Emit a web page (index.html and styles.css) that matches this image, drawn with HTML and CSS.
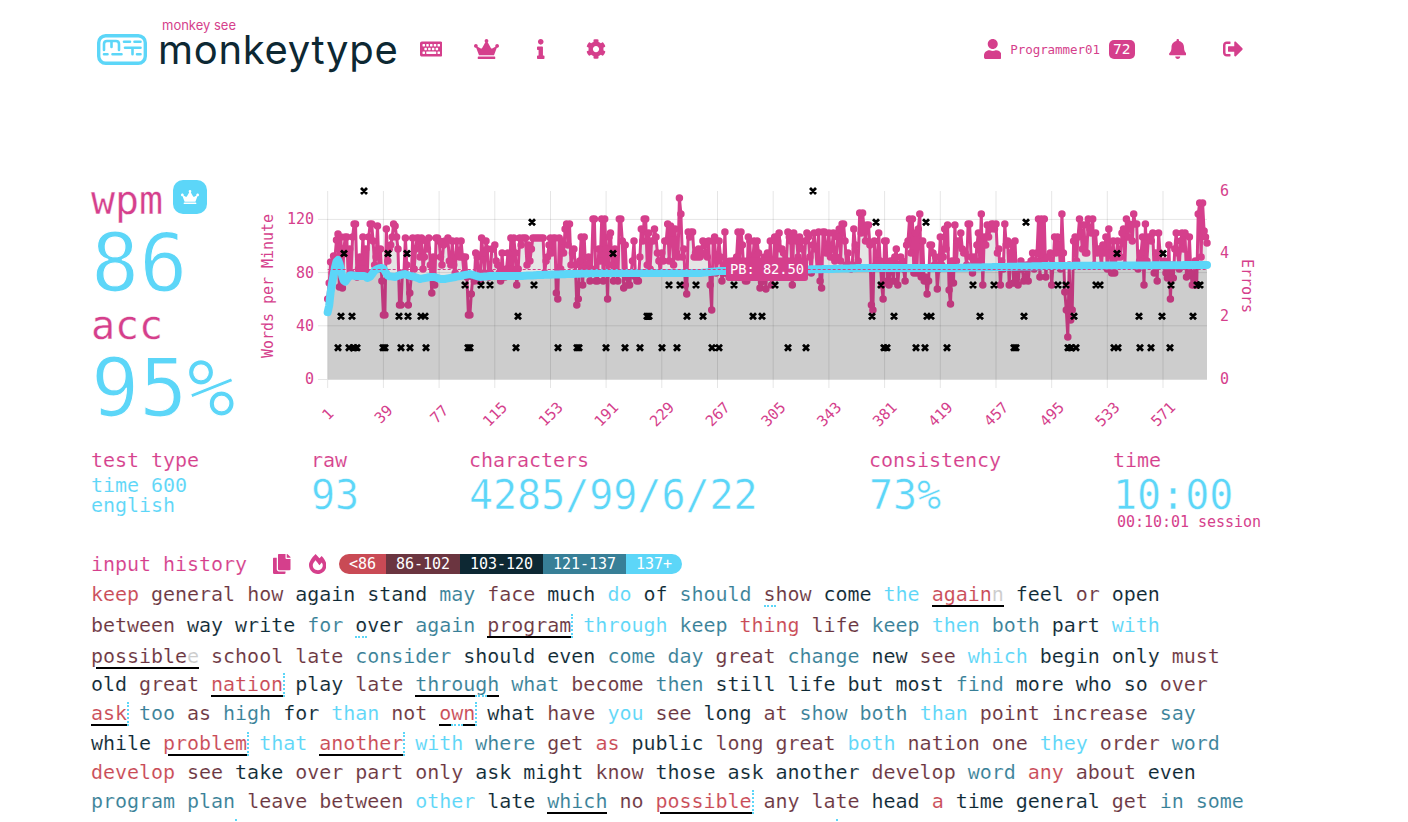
FILE: index.html
```html
<!DOCTYPE html>
<html lang="en">

<head>
    <meta charset="UTF-8">
    <meta name="viewport" content="width=device-width, initial-scale=1.0">
    <title>Monkeytype</title>
    <link rel="stylesheet" href="styles.css">
</head>

<body>
    <div class="page">

        <header class="top">
            <svg class="logo" viewBox="97 34 50 31" aria-label="logo">
                <rect x="98.7" y="35.7" width="46.6" height="27.6" rx="7" />
                <path d="M104 50V44Q104 41 107 41H116Q119 41 119 44V50M111.5 41V47" />
                <path d="M124 41.7H130M134.5 41.7H140.5M125 47.7H140.5M132.5 47.7V54.3" />
                <path d="M104 54.3H107.5M112.5 54.3H121.5M137 54.3H140.5" />
            </svg>
            <div class="brand">
                <div class="brand-see">monkey see</div>
                <div class="brand-name">monkeytype</div>
            </div>
            <nav class="nav">
                <a class="nav-item"><svg class="icon" viewBox="0 0 576 512"><path d="M528 448H48c-26.51 0-48-21.49-48-48V112c0-26.51 21.49-48 48-48h480c26.51 0 48 21.49 48 48v288c0 26.51-21.49 48-48 48zM128 180v-40c0-6.627-5.373-12-12-12H76c-6.627 0-12 5.373-12 12v40c0 6.627 5.373 12 12 12h40c6.627 0 12-5.373 12-12zm96 0v-40c0-6.627-5.373-12-12-12h-40c-6.627 0-12 5.373-12 12v40c0 6.627 5.373 12 12 12h40c6.627 0 12-5.373 12-12zm96 0v-40c0-6.627-5.373-12-12-12h-40c-6.627 0-12 5.373-12 12v40c0 6.627 5.373 12 12 12h40c6.627 0 12-5.373 12-12zm96 0v-40c0-6.627-5.373-12-12-12h-40c-6.627 0-12 5.373-12 12v40c0 6.627 5.373 12 12 12h40c6.627 0 12-5.373 12-12zm96 0v-40c0-6.627-5.373-12-12-12h-40c-6.627 0-12 5.373-12 12v40c0 6.627 5.373 12 12 12h40c6.627 0 12-5.373 12-12zm-336 96v-40c0-6.627-5.373-12-12-12h-40c-6.627 0-12 5.373-12 12v40c0 6.627 5.373 12 12 12h40c6.627 0 12-5.373 12-12zm96 0v-40c0-6.627-5.373-12-12-12h-40c-6.627 0-12 5.373-12 12v40c0 6.627 5.373 12 12 12h40c6.627 0 12-5.373 12-12zm96 0v-40c0-6.627-5.373-12-12-12h-40c-6.627 0-12 5.373-12 12v40c0 6.627 5.373 12 12 12h40c6.627 0 12-5.373 12-12zm96 0v-40c0-6.627-5.373-12-12-12h-40c-6.627 0-12 5.373-12 12v40c0 6.627 5.373 12 12 12h40c6.627 0 12-5.373 12-12zm-336 96v-40c0-6.627-5.373-12-12-12H76c-6.627 0-12 5.373-12 12v40c0 6.627 5.373 12 12 12h40c6.627 0 12-5.373 12-12zm288 0v-40c0-6.627-5.373-12-12-12H172c-6.627 0-12 5.373-12 12v40c0 6.627 5.373 12 12 12h232c6.627 0 12-5.373 12-12zm96 0v-40c0-6.627-5.373-12-12-12h-40c-6.627 0-12 5.373-12 12v40c0 6.627 5.373 12 12 12h40c6.627 0 12-5.373 12-12z" /></svg></a>
                <a class="nav-item"><svg class="icon" viewBox="0 0 640 512"><path d="M528 448H112c-8.8 0-16 7.2-16 16v32c0 8.8 7.2 16 16 16h416c8.8 0 16-7.2 16-16v-32c0-8.8-7.2-16-16-16zm64-320c-26.5 0-48 21.5-48 48 0 7.1 1.6 13.7 4.4 19.8L476 239.2c-15.4 9.2-35.3 4-44.2-11.6L350.3 85C361 76.2 368 63 368 48c0-26.5-21.5-48-48-48s-48 21.5-48 48c0 15 7 28.2 17.7 37l-81.5 142.6c-8.9 15.6-28.9 20.8-44.2 11.6l-72.3-43.4c2.7-6 4.4-12.7 4.4-19.8 0-26.5-21.5-48-48-48S0 149.5 0 176s21.5 48 48 48c2.6 0 5.2-.4 7.7-.8L128 416h384l72.3-192.8c2.5.4 5.1.8 7.7.8 26.5 0 48-21.5 48-48s-21.5-48-48-48z" /></svg></a>
                <a class="nav-item"><svg class="icon" viewBox="0 0 192 512"><path d="M20 424.229h20V279.771H20c-11.046 0-20-8.954-20-20V212c0-11.046 8.954-20 20-20h112c11.046 0 20 8.954 20 20v212.229h20c11.046 0 20 8.954 20 20V492c0 11.046-8.954 20-20 20H20c-11.046 0-20-8.954-20-20v-47.771c0-11.046 8.954-20 20-20zM96 0C56.235 0 24 32.235 24 72s32.235 72 72 72 72-32.235 72-72S135.764 0 96 0z" /></svg></a>
                <a class="nav-item"><svg class="icon" viewBox="0 0 512 512"><path d="M487.4 315.7l-42.6-24.6c4.3-23.2 4.3-47 0-70.2l42.6-24.6c4.9-2.8 7.1-8.6 5.5-14-11.1-35.6-30-67.8-54.7-94.6-3.8-4.1-10-5.1-14.8-2.3L380.8 110c-17.9-15.4-38.5-27.3-60.8-35.1V25.8c0-5.6-3.9-10.5-9.4-11.7-36.7-8.2-74.3-7.8-109.2 0-5.5 1.2-9.4 6.1-9.4 11.7V75c-22.2 7.9-42.8 19.8-60.8 35.1L88.7 85.5c-4.9-2.8-11-1.9-14.8 2.3-24.7 26.7-43.6 58.9-54.7 94.6-1.7 5.4.6 11.2 5.5 14L67.3 221c-4.3 23.2-4.3 47 0 70.2l-42.6 24.6c-4.9 2.8-7.1 8.6-5.5 14 11.1 35.6 30 67.8 54.7 94.6 3.8 4.1 10 5.1 14.8 2.3l42.6-24.6c17.9 15.4 38.5 27.3 60.8 35.1v49.2c0 5.6 3.9 10.5 9.4 11.7 36.7 8.2 74.3 7.8 109.2 0 5.5-1.2 9.4-6.1 9.4-11.7v-49.2c22.2-7.9 42.8-19.8 60.8-35.1l42.6 24.6c4.9 2.8 11 1.9 14.8-2.3 24.7-26.7 43.6-58.9 54.7-94.6 1.5-5.5-.7-11.3-5.6-14.1zM256 336c-44.1 0-80-35.9-80-80s35.9-80 80-80 80 35.9 80 80-35.9 80-80 80z" /></svg></a>
            </nav>
            <div class="account">
                <svg class="icon" viewBox="0 0 448 512"><path d="M224 256c70.7 0 128-57.3 128-128S294.7 0 224 0 96 57.3 96 128s57.3 128 128 128zm89.6 32h-16.7c-22.2 10.2-46.9 16-72.9 16s-50.6-5.8-72.9-16h-16.7C60.2 288 0 348.2 0 422.4V464c0 26.5 21.5 48 48 48h352c26.5 0 48-21.5 48-48v-41.6c0-74.2-60.2-134.4-134.4-134.4z" /></svg>
                <span class="account-name">Programmer01</span>
                <span class="level">72</span>
                <a class="nav-item"><svg class="icon" viewBox="0 0 448 512"><path d="M224 512c35.32 0 63.97-28.65 63.97-64H160.03c0 35.35 28.65 64 63.97 64zm215.39-149.71c-19.32-20.76-55.47-51.99-55.47-154.29 0-77.7-54.48-139.9-127.94-155.16V32c0-17.67-14.32-32-31.98-32s-31.98 14.33-31.98 32v20.84C118.56 68.1 64.08 130.3 64.08 208c0 102.3-36.15 133.53-55.47 154.29-6 6.45-8.66 14.16-8.61 21.71.11 16.4 12.98 32 32.1 32h383.8c19.12 0 32-15.6 32.1-32 .05-7.55-2.61-15.27-8.61-21.71z" /></svg></a>
                <a class="nav-item"><svg class="icon" viewBox="0 0 512 512"><path d="M497 273L329 441c-15 15-41 4.5-41-17v-96H152c-13.3 0-24-10.7-24-24v-96c0-13.3 10.7-24 24-24h136V88c0-21.4 25.9-32 41-17l168 168c9.3 9.4 9.3 24.6 0 34zM192 436v-40c0-6.6-5.4-12-12-12H96c-17.7 0-32-14.3-32-32V160c0-17.7 14.3-32 32-32h84c6.6 0 12-5.4 12-12V76c0-6.6-5.4-12-12-12H96c-53 0-96 43-96 96v192c0 53 43 96 96 96h84c6.6 0 12-5.4 12-12z" /></svg></a>
            </div>
        </header>

        <section class="summary">
            <div class="big-stats">
                <div class="big-label-row">
                    <span class="big-label">wpm</span>
                    <span class="crown-badge"><svg class="crown-icon" viewBox="0 0 640 512"><path d="M528 448H112c-8.8 0-16 7.2-16 16v32c0 8.8 7.2 16 16 16h416c8.8 0 16-7.2 16-16v-32c0-8.8-7.2-16-16-16zm64-320c-26.5 0-48 21.5-48 48 0 7.1 1.6 13.7 4.4 19.8L476 239.2c-15.4 9.2-35.3 4-44.2-11.6L350.3 85C361 76.2 368 63 368 48c0-26.5-21.5-48-48-48s-48 21.5-48 48c0 15 7 28.2 17.7 37l-81.5 142.6c-8.9 15.6-28.9 20.8-44.2 11.6l-72.3-43.4c2.7-6 4.4-12.7 4.4-19.8 0-26.5-21.5-48-48-48S0 149.5 0 176s21.5 48 48 48c2.6 0 5.2-.4 7.7-.8L128 416h384l72.3-192.8c2.5.4 5.1.8 7.7.8 26.5 0 48-21.5 48-48s-21.5-48-48-48z" /></svg></span>
                </div>
                <div class="big-value">86</div>
                <div class="big-label big-label-acc">acc</div>
                <div class="big-value">95%</div>
            </div>
            <svg id="chart" class="chart" viewBox="258 180 1002 250"></svg>
        </section>

        <section class="stats">
            <div>
                <div class="stat-label">test type</div>
                <div class="stat-small">time 600</div>
                <div class="stat-small">english</div>
            </div>
            <div>
                <div class="stat-label">raw</div>
                <div class="stat-value">93</div>
            </div>
            <div>
                <div class="stat-label">characters</div>
                <div class="stat-value">4285/99/6/22</div>
            </div>
            <div>
                <div class="stat-label">consistency</div>
                <div class="stat-value">73%</div>
            </div>
            <div>
                <div class="stat-label">time</div>
                <div class="stat-value">10:00</div>
                <div class="stat-session">00:10:01 session</div>
            </div>
        </section>

        <section class="history">
            <div class="history-head">
                <span class="history-title">input history</span>
                <svg class="icon history-copy" viewBox="0 0 448 512"><path d="M320 448v40c0 13.255-10.745 24-24 24H24c-13.255 0-24-10.745-24-24V120c0-13.255 10.745-24 24-24h72v296c0 30.879 25.121 56 56 56h168zm0-344V0H152c-13.255 0-24 10.745-24 24v368c0 13.255 10.745 24 24 24h272c13.255 0 24-10.745 24-24V128H344c-13.2 0-24-10.8-24-24zm120.971-31.029L375.029 7.029A24 24 0 0 0 358.059 0H352v96h96v-6.059a24 24 0 0 0-7.029-16.97z" /></svg>
                <svg class="icon history-fire" viewBox="0 0 448 512"><path d="M323.56 51.2c-20.8 19.3-39.58 39.59-56.22 59.97C240.08 73.62 206.28 35.53 168 0 69.74 91.17 0 209.96 0 281.6 0 408.85 100.29 512 224 512s224-103.15 224-230.4c0-53.27-51.98-163.14-124.44-230.4zm-19.47 340.65C282.43 407.01 255.72 416 226.86 416 154.71 416 96 368.26 96 290.75c0-38.61 24.31-72.63 72.79-130.75 6.93 7.98 98.83 125.34 98.83 125.34l58.63-66.88c4.14 6.85 7.91 13.55 11.27 19.97 27.35 52.19 15.81 118.97-33.43 153.42z" /></svg>
                <div class="heat">
                    <span class="heat-0">&lt;86</span>
                    <span class="heat-1">86-102</span>
                    <span class="heat-2">103-120</span>
                    <span class="heat-3">121-137</span>
                    <span class="heat-4">137+</span>
                </div>
            </div>

            <div class="line line-tall">
                <span class="word h0">keep</span><span class="word h1">general</span><span class="word h1">how</span><span class="word h2">again</span><span class="word h2">stand</span><span class="word h3">may</span><span class="word h1">face</span><span class="word h2">much</span><span class="word h4">do</span><span class="word h2">of</span><span class="word h3">should</span><span class="word h1"><span class="dot">s</span>how</span><span class="word h2">come</span><span class="word h4">the</span><span class="word h0 err">again<span class="extra">n</span></span><span class="word h2">feel</span><span class="word h1">or</span><span class="word h2">open</span>
            </div>
            <div class="line line-tall">
                <span class="word h1">between</span><span class="word h2">way</span><span class="word h2">write</span><span class="word h3">for</span><span class="word h2"><span class="dot">o</span>ver</span><span class="word h3">again</span><span class="word h1 err end">program</span><span class="word h4">through</span><span class="word h3">keep</span><span class="word h0">thing</span><span class="word h1">life</span><span class="word h3">keep</span><span class="word h4">then</span><span class="word h3">both</span><span class="word h2">part</span><span class="word h4">with</span>
            </div>
            <div class="line line-short">
                <span class="word h1 err inset">possible<span class="extra">e</span></span><span class="word h1">school</span><span class="word h1">late</span><span class="word h3">consider</span><span class="word h2">should</span><span class="word h2">even</span><span class="word h3">come</span><span class="word h3">day</span><span class="word h1">great</span><span class="word h3">change</span><span class="word h2">new</span><span class="word h1">see</span><span class="word h4">which</span><span class="word h2">begin</span><span class="word h2">only</span><span class="word h1">must</span>
            </div>
            <div class="line">
                <span class="word h2">old</span><span class="word h1">great</span><span class="word h0 err end">nation</span><span class="word h2">play</span><span class="word h1">late</span><span class="word h3 err">throu<span class="dot">g</span>h</span><span class="word h3">what</span><span class="word h1">become</span><span class="word h3">then</span><span class="word h2">still</span><span class="word h2">life</span><span class="word h2">but</span><span class="word h2">most</span><span class="word h3">find</span><span class="word h2">more</span><span class="word h2">who</span><span class="word h2">so</span><span class="word h1">over</span>
            </div>
            <div class="line line-mid">
                <span class="word h0 err end">ask</span><span class="word h3">too</span><span class="word h1">as</span><span class="word h3">high</span><span class="word h2">for</span><span class="word h4">than</span><span class="word h1">not</span><span class="word h0 err end">o<span class="dot">w</span>n</span><span class="word h2">what</span><span class="word h1">have</span><span class="word h4">you</span><span class="word h1">see</span><span class="word h2">long</span><span class="word h1">at</span><span class="word h3">show</span><span class="word h3">both</span><span class="word h4">than</span><span class="word h1">point</span><span class="word h1">increase</span><span class="word h3">say</span>
            </div>
            <div class="line">
                <span class="word h2">while</span><span class="word h0 err end inset">problem</span><span class="word h4">that</span><span class="word h0 err end">another</span><span class="word h4">with</span><span class="word h3">where</span><span class="word h1">get</span><span class="word h0">as</span><span class="word h2">public</span><span class="word h1">long</span><span class="word h1">great</span><span class="word h4">both</span><span class="word h1">nation</span><span class="word h1">one</span><span class="word h4">they</span><span class="word h1">order</span><span class="word h3">word</span>
            </div>
            <div class="line">
                <span class="word h0">develop</span><span class="word h1">see</span><span class="word h2">take</span><span class="word h1">over</span><span class="word h1">part</span><span class="word h1">only</span><span class="word h2">ask</span><span class="word h2">might</span><span class="word h1">know</span><span class="word h2">those</span><span class="word h2">ask</span><span class="word h2">another</span><span class="word h1">develop</span><span class="word h3">word</span><span class="word h0">any</span><span class="word h1">about</span><span class="word h2">even</span>
            </div>
            <div class="line">
                <span class="word h3">program</span><span class="word h3">plan</span><span class="word h1">leave</span><span class="word h1">between</span><span class="word h4">other</span><span class="word h2">late</span><span class="word h3 err">which</span><span class="word h1">no</span><span class="word h0 err end inset">possible</span><span class="word h1">any</span><span class="word h1">late</span><span class="word h2">head</span><span class="word h0">a</span><span class="word h2">time</span><span class="word h2">general</span><span class="word h1">get</span><span class="word h3">in</span><span class="word h3">some</span>
            </div>
            <div class="line">
                <span class="word h1">become</span><span class="word h2 end">power</span><span class="word h1">while</span><span class="word h2">over</span><span class="word h2">think</span><span class="word h1">use</span><span class="word h1">more</span><span class="word h2">like</span><span class="word h1">over</span><span class="word h2">hold</span><span class="word h2">part</span><span class="word h1 end">fit</span><span class="word h2">ask</span><span class="word h1">come</span><span class="word h1">now</span><span class="word h2">head</span><span class="word h1">late</span>
            </div>
        </section>

    </div>
    <script src="chart.js"></script>
</body>

</html>
```

FILE: styles.css
```css
html,
body {
    margin: 0;
    height: 822px;
    overflow: hidden;
    background: #fff;
}

body {
    font-family: "DejaVu Sans Mono", monospace;
    letter-spacing: -0.002em;
    color: #d53f8c;
}

.page {
    padding: 0 148px 0 91px;
}

/* header */

.top {
    display: flex;
    align-items: center;
    height: 98px;
    padding-left: 6px;
}

.logo {
    width: 50px;
    height: 31px;
    fill: none;
    stroke: #5cd6f8;
    stroke-width: 2.6;
    stroke-linecap: round;
}

.logo rect {
    stroke-width: 3.4;
}

.brand {
    margin-left: 11px;
    width: 239px;
    margin-top: -13px;
}

.brand-see {
    font-family: Inter, sans-serif;
    font-size: 13px;
    line-height: 14px;
    letter-spacing: 0;
    margin-left: 4px;
}

.brand-name {
    font-family: Inter, sans-serif;
    font-size: 40px;
    line-height: 36px;
    letter-spacing: 0.7px;
    white-space: nowrap;
    color: #0d2833;
}

.icon {
    height: 20px;
    fill: #d53f8c;
    display: block;
}

.nav {
    display: flex;
    margin-left: 6.5px;
}

.nav-item {
    width: 55px;
    display: flex;
    justify-content: center;
}

.account {
    display: flex;
    align-items: center;
    margin-left: auto;
}

.account-name {
    font-size: 12.5px;
    margin-left: 9px;
}

.level {
    margin-left: 9px;
    background: #d53f8c;
    color: #fff;
    font-size: 14.5px;
    line-height: 19px;
    padding: 0 4px;
    border-radius: 5px;
    margin-right: 15.5px;
}

/* wpm, acc and the graph */

.summary {
    display: grid;
    grid-template-columns: 167px 1fr;
    margin-top: 82px;
}

.big-label-row {
    display: flex;
    align-items: flex-start;
    height: 40px;
}

.big-label {
    font-size: 40px;
    line-height: 40px;
    -webkit-text-stroke: .3px #fff;
}

.big-label-acc {
    margin-top: 3px;
}

.big-value {
    font-size: 80px;
    line-height: 76px;
    margin-top: 6px;
    color: #5cd6f8;
    -webkit-text-stroke: 1.1px #fff;
}

.crown-badge {
    width: 34px;
    height: 34px;
    margin-left: 10px;
    border-radius: 10px;
    background: #5cd6f8;
    display: flex;
    align-items: center;
    justify-content: center;
}

.crown-icon {
    width: 18px;
    fill: #fff;
}

.chart {
    display: block;
    width: 1002px;
    height: 250px;
}

.axis-text {
    font-size: 15px;
    fill: #d53f8c;
}

.grid-line {
    stroke: rgba(0, 0, 0, .1);
    stroke-width: 1;
}

.area {
    fill: rgba(0, 0, 0, .1);
}

.raw-line {
    fill: none;
    stroke: #d53f8c;
    stroke-width: 3;
    stroke-linejoin: round;
}

.raw-dots {
    fill: none;
    stroke: #d53f8c;
    stroke-width: 7.5;
    stroke-linecap: round;
}

.wpm-line {
    fill: none;
    stroke: #5cd6f8;
    stroke-width: 8;
    stroke-linecap: round;
    stroke-linejoin: round;
}

.error-marks {
    fill: none;
    stroke: #000;
    stroke-width: 2.8;
}

.pb-line {
    stroke: #d53f8c;
    stroke-width: 1;
    stroke-dasharray: 3 2;
}

.pb-box {
    fill: #d53f8c;
}

.pb-text {
    font-size: 13.75px;
    fill: #fff;
    text-anchor: middle;
}

/* second row of stats */

.stats {
    display: grid;
    grid-template-columns: 220px 158px 400px 244px auto;
    margin-top: 20px;
}

.stat-label {
    font-size: 20px;
    line-height: 20px;
    -webkit-text-stroke: .12px #fff;
}

.stat-small {
    font-size: 20px;
    line-height: 20px;
    color: #5cd6f8;
    -webkit-text-stroke: .12px #fff;
}

.stat-small:nth-child(2) {
    margin-top: 5px;
}

.stat-value {
    font-size: 40px;
    line-height: 40px;
    margin-top: 5px;
    color: #5cd6f8;
    -webkit-text-stroke: .5px #fff;
}

.stat-session {
    font-size: 15px;
    line-height: 15px;
    margin-left: 4px;
    white-space: nowrap;
}

/* input history */

.history {
    margin-top: 24px;
}

.history-head {
    display: flex;
    align-items: center;
    height: 20px;
    margin-bottom: 5px;
}

.history-title {
    font-size: 20px;
    line-height: 20px;
    flex: none;
    width: 157px;
    white-space: nowrap;
    -webkit-text-stroke: .12px #fff;
}

.history-copy {
    margin-left: 25px;
}

.history-fire {
    margin-left: 18px;
}

.heat {
    display: flex;
    margin-left: 13px;
    font-size: 15px;
    line-height: 20px;
    color: #fff;
    border-radius: 10px;
    overflow: hidden;
}

.heat span {
    padding: 0 10px;
}

.heat-0 { background: #c94a55; }
.heat-1 { background: #6b3540; }
.heat-2 { background: #0d2833; }
.heat-3 { background: #377f97; }
.heat-4 { background: #5cd6f8; }

.line {
    display: flex;
    column-gap: 12px;
    height: 29px;
    white-space: nowrap;
}

.line-tall {
    height: 31px;
}

.line-mid {
    height: 30px;
}

.line-short {
    height: 28px;
}

.word {
    position: relative;
    box-sizing: border-box;
    height: 28px;
    font-size: 20px;
    line-height: 30px;
    border-bottom: 2px solid transparent;
    -webkit-text-stroke: .12px #fff;
}

.h0 { color: #c94a55; }
.h1 { color: #6b3540; }
.h2 { color: #0d2833; }
.h3 { color: #377f97; }
.h4 { color: #5cd6f8; }

.err {
    border-bottom-color: #000;
}

.extra {
    color: #ccc;
}

.dot {
    display: inline-block;
    box-sizing: border-box;
    height: 28px;
    vertical-align: top;
    background: #fff;
    border-bottom: 2px dotted #5cd6f8;
}

.end::after {
    content: "";
    position: absolute;
    top: 4px;
    bottom: -2px;
    right: -2px;
    border-right: 2px dotted #5cd6f8;
}

.inset::before {
    content: "";
    position: absolute;
    left: 0;
    bottom: -2px;
    width: 5px;
    height: 2px;
    background: #fff;
}
```

FILE: chart.js
```js
const svg = document.getElementById('chart');

const xAt = (sec) => 327.7 + 1.4655 * (sec - 1);
const yErr = (n) => 379 - n * 31.35;

// small seeded random, so that every run draws the same line
let seed = 86;
const rand = function () {
    seed = (seed + 0x6D2B79F5) | 0;
    let t = Math.imul(seed ^ (seed >>> 15), 1 | seed);
    t = (t + Math.imul(t ^ (t >>> 7), 61 | t)) ^ t;
    return ((t ^ (t >>> 14)) >>> 0) / 4294967296;
};

// highest the raw line gets in each stretch of the graph
const tops = [[400, 226], [560, 238], [680, 224], [830, 232], [1210, 224]];

// peaks and dips read off the picture: [x, y]
const fixed = [
    [327, 299], [329, 283], [331, 262], [333, 256], [336, 240], [338, 234],
    [340, 287], [342, 288], [354, 224], [355, 224], [370, 224], [371, 224], [383, 315], [385, 315],
    [393, 224], [395, 226], [399, 305], [401, 305], [408, 305], [410, 293], [432, 293], [434, 285],
    [468, 315], [470, 315], [472, 294], [558, 299], [556, 293], [567, 224], [569, 224],
    [577, 305], [579, 299], [593, 219], [595, 219], [602, 219], [604, 219], [608, 310], [607, 299],
    [619, 219], [621, 219], [623, 288], [644, 219], [645, 219], [668, 224], [670, 226], [679, 198], [681, 214],
    [687, 294], [685, 285], [712, 310], [710, 285], [760, 288], [762, 282], [822, 288], [820, 281],
    [842, 224], [844, 224], [860, 213], [862, 213], [872, 305], [873, 310], [883, 299], [881, 285],
    [910, 219], [912, 219], [920, 214], [927, 294], [925, 277], [951, 304], [949, 290], [953, 283],
    [968, 224], [970, 224], [982, 214], [993, 224], [1014, 283], [1026, 278], [1038, 219], [1041, 219],
    [1045, 219], [1062, 214], [1068, 337], [1067, 310], [1072, 310], [1065, 292], [1070, 320], [1080, 219], [1088, 219],
    [1092, 219], [1115, 273], [1127, 219], [1134, 214], [1145, 224], [1171, 315], [1170, 299], [1168, 278], [1173, 278],
    [1198, 214], [1200, 203], [1202, 203], [1204, 231], [1205, 237], [1207, 243]
];

const raw = [];
for (let sec = 1; sec <= 601; sec++) {
    const x = xAt(sec);
    const top = tops.find((t) => x < t[0])[1];
    // slow drift plus a big jump each second, as a real test has
    const mean = 252 + 8 * Math.sin(x / 23) + 5 * Math.sin(x / 7);
    let y = mean + (rand() - 0.5) * 52;
    if (rand() < 0.05) y = 277 + rand() * 10;
    y = Math.max(top, Math.round(y / 4) * 4 + 1);
    raw.push([x, y]);
}
fixed.forEach(function (f) {
    const i = Math.max(0, Math.min(600, Math.round((f[0] - 327.7) / 1.4655)));
    raw[i][1] = f[1];
});

// wpm line, between these the values are interpolated
const wpmKeys = [
    [327, 315], [329, 307], [331, 289], [333, 278], [336, 262], [338, 260], [340, 265], [343, 280], [345, 282],
    [350, 275], [355, 276], [365, 276], [367, 278], [370, 277], [375, 270], [380, 268], [383, 268], [388, 276],
    [395, 277], [400, 275], [405, 274], [410, 276], [415, 277], [420, 279], [425, 278], [430, 277], [435, 277],
    [440, 279], [445, 279], [450, 278], [465, 275], [470, 274], [480, 277], [490, 276], [520, 276], [540, 275],
    [600, 273], [650, 273], [700, 273], [720, 271], [830, 269], [860, 268], [950, 268], [1050, 266], [1207, 265]
];
const wpm = raw.map(function (p) {
    const x = p[0];
    let k = 0;
    while (k < wpmKeys.length - 2 && wpmKeys[k + 1][0] < x) k++;
    const a = wpmKeys[k], b = wpmKeys[k + 1];
    return [x, a[1] + (b[1] - a[1]) * (x - a[0]) / (b[0] - a[0])];
});

// missed characters: x positions per error count
const errors = {
    1: [338, 349, 354, 357, 383, 385, 401, 410, 426, 468, 470, 516, 558, 577, 579, 606, 625, 640, 662, 677, 712, 719, 788, 806, 884, 887, 916, 925, 947, 1014, 1016, 1068, 1071, 1076, 1114, 1118, 1140, 1151, 1170],
    2: [341, 352, 399, 408, 421, 425, 518, 647, 649, 687, 703, 753, 762, 872, 894, 927, 931, 980, 1024, 1074, 1139, 1162, 1193],
    3: [465, 481, 490, 534, 669, 680, 696, 734, 775, 881, 973, 994, 1058, 1066, 1096, 1100, 1197, 1200, 1171],
    4: [344, 388, 407, 613, 1117, 1163],
    5: [532, 876, 926, 1026],
    6: [364, 813]
};

const pathOf = (pts) => pts.map((p, i) => (i ? 'L' : 'M') + p[0].toFixed(1) + ' ' + p[1].toFixed(1)).join('');
const dotsOf = (pts) => pts.map((p) => 'M' + p[0].toFixed(1) + ' ' + p[1].toFixed(1) + 'h0').join('');
const areaOf = (pts) => pathOf(pts) + 'L' + pts[pts.length - 1][0].toFixed(1) + ' 379.7L327.7 379.7Z';

let out = '';

// grid
[219.4, 272.6, 325.8].forEach(function (y) {
    out += `<line class="grid-line" x1="318" x2="1207" y1="${y}" y2="${y}" />`;
});
out += '<line class="grid-line" x1="318" x2="327" y1="379.5" y2="379.5" />';
for (let i = 0; i <= 15; i++) {
    const x = xAt(1 + 38 * i).toFixed(1);
    out += `<line class="grid-line" x1="${x}" x2="${x}" y1="191" y2="388" />`;
    const lx = +x + 1;
    const t = `rotate(-45 ${lx} 415)`;
    out += `<text class="axis-text" text-anchor="middle" x="${lx}" y="419" transform="${t}">${1 + 38 * i}</text>`;
}

// axis labels
[[120, 219.4], [80, 272.6], [40, 325.8], [0, 379]].forEach(function (t) {
    out += `<text class="axis-text" text-anchor="end" x="314" y="${t[1] + 5}">${t[0]}</text>`;
});
[[6, 191], [4, 253], [2, 315.5], [0, 379]].forEach(function (t) {
    out += `<text class="axis-text" x="1220" y="${t[1] + 5}">${t[0]}</text>`;
});
out += '<text class="axis-text" text-anchor="middle" transform="translate(273 286) rotate(-90)">Words per Minute</text>';
out += '<text class="axis-text" text-anchor="middle" transform="translate(1242 286) rotate(90)">Errors</text>';

// lines, same order as they stack in the picture
out += `<path class="area" d="${areaOf(raw)}" />`;
out += `<path class="raw-line" d="${pathOf(raw)}" />`;
out += `<path class="raw-dots" d="${dotsOf(raw)}" />`;
out += `<path class="area" d="${areaOf(wpm)}" />`;
out += `<path class="wpm-line" d="${pathOf(wpm)}" />`;

// error crosses
let marks = '';
Object.keys(errors).forEach(function (n) {
    const y = yErr(n);
    errors[n].forEach(function (x) {
        marks += `M${x - 3} ${y - 3}l6 6m0 -6l-6 6`;
    });
});
out += `<path class="error-marks" d="${marks}" />`;

// personal best line and its label
out += '<line class="pb-line" x1="327.7" x2="1207" y1="269.5" y2="269.5" />';
out += '<rect class="pb-box" x="726" y="257.5" width="82" height="23.5" rx="3" />';
out += '<text class="pb-text" x="767" y="274">PB: 82.50</text>';

svg.innerHTML = out;
```
